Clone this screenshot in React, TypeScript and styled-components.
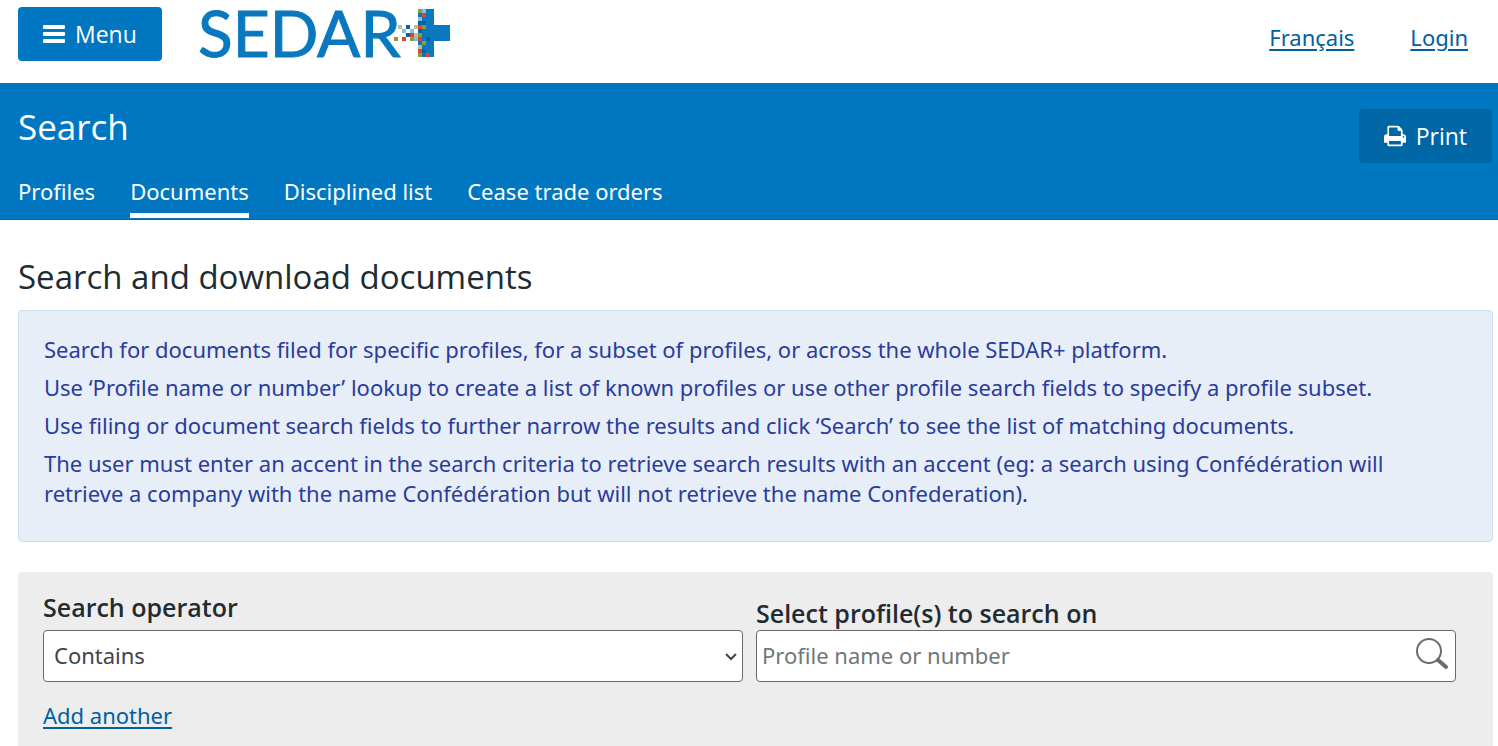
import React from "react";
import styled, { createGlobalStyle } from "styled-components";

const GlobalStyle = createGlobalStyle`
  *, *::before, *::after { box-sizing: border-box; }
  body {
    margin: 0;
    background: #fff;
    color: #212b32;
    font-family: "Noto Sans", "Open Sans", sans-serif;
    font-size: 22px;
    line-height: 30px;
  }
  button, input, select { font: inherit; }
`;

const Header = styled.header`
  display: flex;
  align-items: flex-start;
  gap: 36px;
  height: 83px;
  padding: 7px 30px 0 18px;
`;

const Button = styled.button<{ $tone: string }>`
  display: inline-flex;
  align-items: center;
  justify-content: center;
  gap: 10px;
  height: 54px;
  padding: 0 25px 1px;
  border: 0;
  border-radius: 4px;
  background: ${(p) => p.$tone};
  color: #fff;
  font-family: "Open Sans", sans-serif;
  font-size: 23px;
  cursor: pointer;
`;

const LogoLink = styled.a`
  display: block;
  height: 52px;

  svg { overflow: visible; }
`;

const HeaderLinks = styled.nav`
  display: flex;
  gap: 56px;
  margin-left: auto;
  padding-top: 15px;
`;

const TextLink = styled.a`
  color: #0061a1;
  text-decoration: underline;
  text-decoration-thickness: 2px;
  text-underline-offset: 3px;
`;

const Banner = styled.section`
  display: flex;
  justify-content: space-between;
  align-items: flex-start;
  padding: 20px 6px 1px 18px;
  background: #0077c0;
  border-bottom: 1px solid #006cae;
  color: #fff;
`;

const BannerAction = styled.div`
  padding-top: 6px;
`;

const PageTitle = styled.h1`
  margin: 0 0 24px;
  font-family: "Open Sans", sans-serif;
  font-size: 35px;
  font-weight: 400;
  line-height: 48px;
`;

const Tabs = styled.nav`
  display: flex;
  gap: 35px;
`;

const Tab = styled.a<{ $active?: boolean }>`
  padding: 1px 0 7px;
  border-bottom: 5px solid ${(p) => (p.$active ? "#fff" : "transparent")};
  color: #fff;
  text-decoration: none;
`;

const Main = styled.main`
  padding: 33px 5px 0 18px;
`;

const SectionTitle = styled.h2`
  margin: 0 0 9px;
  font-family: "Open Sans", sans-serif;
  font-size: 33px;
  font-weight: 400;
  line-height: 48px;
`;

const Notice = styled.div`
  display: flex;
  flex-direction: column;
  gap: 8px;
  padding: 23px 25px 33px;
  border: 1px solid #c9dff0;
  border-radius: 4px;
  background: #e7eef7;
  color: #2a3c9c;

  p { margin: 0; }
`;

const SearchPanel = styled.form`
  margin-top: 30px;
  padding: 20px 37px 16px 25px;
  border-radius: 4px 4px 0 0;
  background: #ededed;
`;

const Fields = styled.div`
  display: grid;
  grid-template-columns: 1fr 1fr;
  align-items: end;
  gap: 13px;
  margin-bottom: 18px;
`;

const Field = styled.div<{ $gap: number }>`
  display: flex;
  flex-direction: column;
  gap: ${(p) => p.$gap}px;
`;

const Label = styled.label`
  font-family: "Open Sans", sans-serif;
  font-size: 25px;
  font-weight: 600;
`;

const Control = styled.div`
  position: relative;
  display: flex;
`;

const Select = styled.select`
  width: 100%;
  height: 52px;
  padding: 0 10px 2px;
  border: 1px solid #6a6a6a;
  border-radius: 4px;
  appearance: none;
  background: #fff;
  color: #3f4448;
`;

const TextInput = styled.input`
  width: 100%;
  height: 52px;
  padding: 0 48px 2px 5px;
  border: 1px solid #6a6a6a;
  border-radius: 4px;
  background: #fff;
  color: #3f4448;

  &::placeholder { color: #6f777b; opacity: 1; }
`;

const Chevron = styled.svg`
  position: absolute;
  right: 6px;
  top: 22px;
  pointer-events: none;
`;

const LookupButton = styled.button`
  position: absolute;
  right: 7px;
  top: 7px;
  display: flex;
  padding: 0;
  border: 0;
  background: none;
  cursor: pointer;
`;

const BLUE = "#0a78be";
const NAVY = "#0b5fa5";
const SKY = "#7fbfe8";
const RED = "#d9482b";
const OLIVE = "#8b9d3a";
const SAND = "#bdbd9c";

/* Mosaic squares of the plus mark as [column, row, colour]. */
const mosaic: [number, number, string][] = [
  [6, 0, OLIVE], [7, 0, SKY],
  [7, 1, RED],
  [6, 2, SKY],
  [6, 3, NAVY], [7, 3, NAVY],
  [1, 4, SAND], [3, 4, NAVY], [5, 4, SAND], [6, 4, RED], [7, 4, OLIVE],
  [2, 5, SKY], [4, 5, SKY], [6, 5, NAVY],
  [3, 6, NAVY], [4, 6, RED], [5, 6, SAND], [6, 6, OLIVE],
  [0, 7, OLIVE], [2, 7, RED], [4, 7, OLIVE], [5, 7, SKY], [6, 7, RED], [8, 7, NAVY],
  [7, 8, OLIVE],
  [6, 9, SAND],
  [6, 10, RED], [7, 10, NAVY],
  [6, 11, OLIVE], [8, 11, RED],
];

const Logo = () => (
  <svg width="254" height="52" viewBox="0 0 254 52" role="img" aria-label="SEDAR+">
    <text x="0" y="50" fill={BLUE} stroke={BLUE} strokeWidth="1" fontFamily="Lato, sans-serif" fontSize="64">SEDAR</text>
    <path d="M220 2h16v16h16v16h-16v16h-16z" fill={BLUE} />
    {mosaic.map(([c, r, fill]) => (
      <rect key={`${c}-${r}`} x={196 + c * 4} y={2 + r * 4} width="4" height="4" fill={fill} />
    ))}
  </svg>
);

const BarsIcon = () => (
  <svg width="22" height="18" viewBox="0 0 22 18" fill="currentColor" aria-hidden="true">
    <rect width="22" height="4" rx="1" />
    <rect y="7" width="22" height="4" rx="1" />
    <rect y="14" width="22" height="4" rx="1" />
  </svg>
);

const PrintIcon = () => (
  <svg width="22" height="24" viewBox="0 0 1664 1792" fill="currentColor" aria-hidden="true">
    <path d="M384 1536h896v-256h-896v256zM384 896h896v-384h-160q-40 0-68-28t-28-68v-160h-640v640zM1536 960q0-26-19-45t-45-19-45 19-19 45 19 45 45 19 45-19 19-45zM1664 960v416q0 13-9.5 22.5t-22.5 9.5h-224v160q0 40-28 68t-68 28h-960q-40 0-68-28t-28-68v-160h-224q-13 0-22.5-9.5t-9.5-22.5v-416q0-79 56.5-135.5t135.5-56.5h64v-544q0-40 28-68t68-28h672q40 0 88 20t76 48l152 152q28 28 48 76t20 88v256h64q79 0 135.5 56.5t56.5 135.5z" />
  </svg>
);

const tabs = ["Profiles", "Documents", "Disciplined list", "Cease trade orders"];

const notes = [
  "Search for documents filed for specific profiles, for a subset of profiles, or across the whole SEDAR+ platform.",
  "Use ‘Profile name or number’ lookup to create a list of known profiles or use other profile search fields to specify a profile subset.",
  "Use filing or document search fields to further narrow the results and click ‘Search’ to see the list of matching documents.",
  "The user must enter an accent in the search criteria to retrieve search results with an accent (eg: a search using Confédération will retrieve a company with the name Confédération but will not retrieve the name Confederation).",
];

export default function App() {
  return (
    <>
      <GlobalStyle />
      <Header>
        <Button type="button" $tone="#0077c0">
          <BarsIcon />
          Menu
        </Button>
        <LogoLink href="#home"><Logo /></LogoLink>
        <HeaderLinks>
          <TextLink href="#fr">Français</TextLink>
          <TextLink href="#login">Login</TextLink>
        </HeaderLinks>
      </Header>
      <Banner>
        <div>
          <PageTitle>Search</PageTitle>
          <Tabs>
            {tabs.map((t) => (
              <Tab key={t} href="#tab" $active={t === "Documents"}>{t}</Tab>
            ))}
          </Tabs>
        </div>
        <BannerAction>
          <Button type="button" $tone="#0067a7">
            <PrintIcon />
            Print
          </Button>
        </BannerAction>
      </Banner>
      <Main>
        <SectionTitle>Search and download documents</SectionTitle>
        <Notice>
          {notes.map((n) => <p key={n}>{n}</p>)}
        </Notice>
        <SearchPanel>
          <Fields>
            <Field $gap={8}>
              <Label htmlFor="operator">Search operator</Label>
              <Control>
                <Select id="operator" defaultValue="Contains">
                  <option>Contains</option>
                </Select>
                <Chevron width="12" height="10" viewBox="0 0 12 10" fill="none" stroke="#3f4448" strokeWidth="2" aria-hidden="true">
                  <path d="M1 2l5 5 5-5" />
                </Chevron>
              </Control>
            </Field>
            <Field $gap={2}>
              <Label htmlFor="profile">Select profile(s) to search on</Label>
              <Control>
                <TextInput id="profile" type="text" placeholder="Profile name or number" />
                <LookupButton type="button" aria-label="Look up profile">
                  <svg width="34" height="34" viewBox="0 0 34 34" fill="none" stroke="#6f6b6b" aria-hidden="true">
                    <circle cx="14" cy="14" r="12" strokeWidth="2" />
                    <path d="M23 23l8 7" strokeWidth="4" strokeLinecap="round" />
                  </svg>
                </LookupButton>
              </Control>
            </Field>
          </Fields>
          <TextLink href="#add">Add another</TextLink>
        </SearchPanel>
      </Main>
    </>
  );
}
